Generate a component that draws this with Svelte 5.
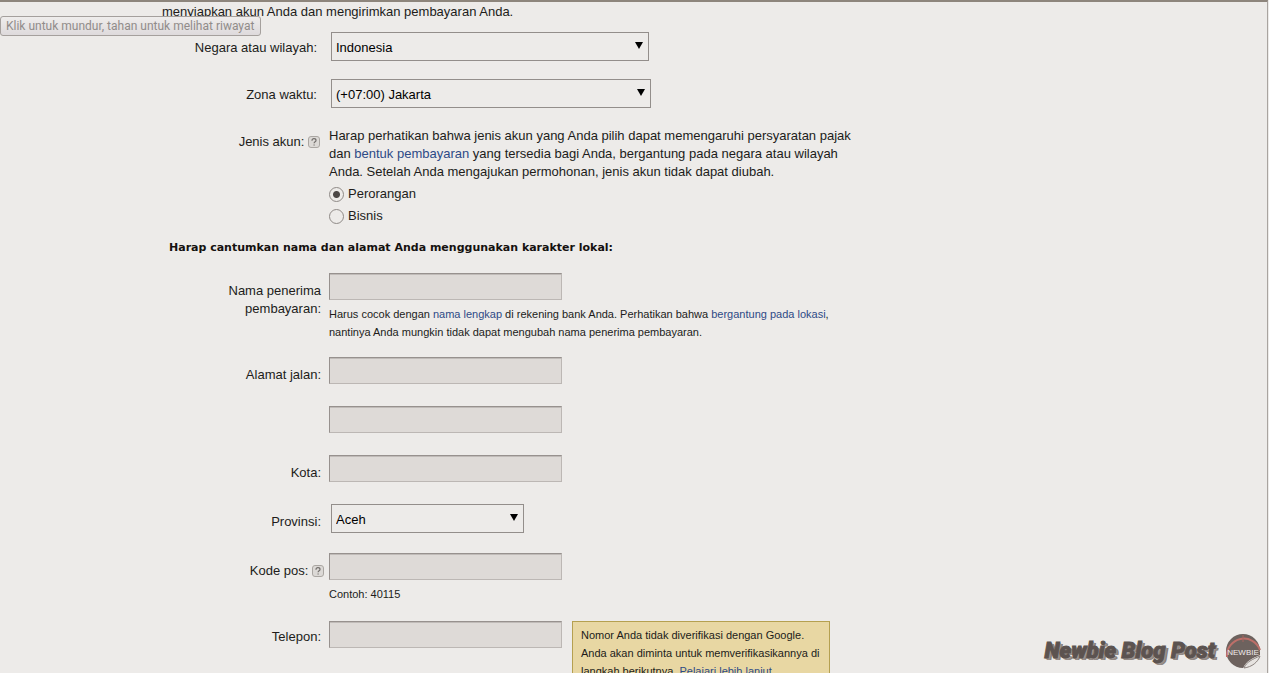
<script>
	let country = $state('Indonesia');
	let timezone = $state('(+07:00) Jakarta');
	let accountType = $state('Perorangan');
	let province = $state('Aceh');
	let form = $state({ payee: '', street: '', street2: '', city: '', zip: '', phone: '' });
</script>

{#snippet help()}
	<svg class="help" viewBox="0 0 12 12" aria-hidden="true">
		<rect x="0.5" y="0.5" width="11" height="11" rx="2.5" fill="#dcd9d6" stroke="#aaa6a2" />
		<path
			d="M4 4.7C4 3.3 4.8 2.7 6 2.7s2 .7 2 1.7c0 1.4-1.9 1.4-1.9 2.9M6.1 8.4v1.2"
			fill="none"
			stroke="#716d6a"
			stroke-width="1.2"
		/>
	</svg>
{/snippet}

<div class="page">
	<div class="tooltip" role="tooltip">Klik untuk mundur, tahan untuk melihat riwayat</div>

	<main>
		<p class="intro">menyiapkan akun Anda dan mengirimkan pembayaran Anda.</p>

		<form>
			<section class="account">
				<div class="row">
					<label class="label" for="country">Negara atau wilayah:</label>
					<div class="select country">
						<select id="country" bind:value={country}>
							<option>Indonesia</option>
						</select>
					</div>
				</div>

				<div class="row">
					<label class="label" for="timezone">Zona waktu:</label>
					<div class="select timezone">
						<select id="timezone" bind:value={timezone}>
							<option>(+07:00) Jakarta</option>
						</select>
					</div>
				</div>

				<div class="row">
					<span class="label with-help" id="account-type">Jenis akun: {@render help()}</span>
					<div class="types" role="radiogroup" aria-labelledby="account-type">
						<p>
							Harap perhatikan bahwa jenis akun yang Anda pilih dapat memengaruhi persyaratan pajak dan
							<a href="#payment">bentuk pembayaran</a> yang tersedia bagi Anda, bergantung pada negara
							atau wilayah Anda. Setelah Anda mengajukan permohonan, jenis akun tidak dapat diubah.
						</p>
						<label class="radio">
							<input type="radio" name="type" value="Perorangan" bind:group={accountType} />
							Perorangan
						</label>
						<label class="radio">
							<input type="radio" name="type" value="Bisnis" bind:group={accountType} />
							Bisnis
						</label>
					</div>
				</div>
			</section>

			<h2>Harap cantumkan nama dan alamat Anda menggunakan karakter lokal:</h2>

			<section class="address">
				<div class="row">
					<label class="label" for="payee">Nama penerima pembayaran:</label>
					<div>
						<input class="text" id="payee" type="text" bind:value={form.payee} />
						<p class="hint">
							Harus cocok dengan <a href="#name">nama lengkap</a> di rekening bank Anda. Perhatikan
							bahwa <a href="#location">bergantung pada lokasi</a>, nantinya Anda mungkin tidak dapat
							mengubah nama penerima pembayaran.
						</p>
					</div>
				</div>

				<div class="row">
					<label class="label" id="street-label" for="street">Alamat jalan:</label>
					<input class="text" id="street" type="text" bind:value={form.street} />
				</div>

				<div class="row">
					<span class="label"></span>
					<input class="text" type="text" aria-labelledby="street-label" bind:value={form.street2} />
				</div>

				<div class="row">
					<label class="label" for="city">Kota:</label>
					<input class="text" id="city" type="text" bind:value={form.city} />
				</div>

				<div class="row">
					<label class="label" for="province">Provinsi:</label>
					<div class="select province">
						<select id="province" bind:value={province}>
							<option>Aceh</option>
						</select>
					</div>
				</div>

				<div class="row">
					<label class="label with-help" for="zip">Kode pos: {@render help()}</label>
					<div>
						<input class="text" id="zip" type="text" bind:value={form.zip} />
						<p class="hint">Contoh: 40115</p>
					</div>
				</div>

				<div class="row phone">
					<label class="label" for="phone">Telepon:</label>
					<div class="phone-field">
						<input class="text" id="phone" type="text" bind:value={form.phone} />
						<p class="note">
							Nomor Anda tidak diverifikasi dengan Google. Anda akan diminta untuk memverifikasikannya
							di langkah berikutnya. <a href="#verify">Pelajari lebih lanjut</a>
						</p>
					</div>
				</div>
			</section>
		</form>
	</main>

	<div class="watermark">
		<span>Newbie Blog Post</span>
		<svg viewBox="0 0 36 36" aria-hidden="true">
			<path d="M35 18A17 17 0 1 0 18 35C20 29 27 23 35 18Z" fill="#6d625e" />
			<path d="M2 24A17 17 0 0 1 35 17" fill="none" stroke="#bd6f69" stroke-width="2" />
			<path d="M18 2v7" stroke="#a7645f" />
			<path d="M35 18V22C28 25 21 28 18 35L17 30Z" fill="#6d625e" />
			<path d="M19 35C21 29 28 26 35 23 33 29 27 34 19 35Z" fill="#e6e3e0" stroke="#8b827e" />
			<text x="18" y="22" text-anchor="middle">NEWBIE</text>
		</svg>
	</div>
</div>

<style>
	:global(body) {
		overflow: hidden;
		background: #edebe9;
	}

	.page {
		position: relative;
		box-sizing: border-box;
		height: 100vh;
		overflow: hidden;
		margin-right: 1px;
		border-top: 2px solid #8d857c;
		border-right: 1px solid #a9a4a0;
		color: #211c1a;
		font: 13px/18px 'Liberation Sans', Arial, sans-serif;
	}

	p,
	h2 {
		margin: 0;
	}

	a {
		color: #2d4a86;
		text-decoration: none;
	}

	.tooltip {
		position: absolute;
		top: 14px;
		left: 0;
		padding: 0 6px 0 5px;
		border: 1px solid #a5a09d;
		border-radius: 3px;
		background: linear-gradient(#efedec, #dedadc);
		color: #918c8a;
		font: 12px/18px Roboto, 'Noto Sans', sans-serif;
		white-space: nowrap;
	}

	main {
		padding-top: 1px;
	}

	.intro {
		padding-left: 162px;
		margin-bottom: 11px;
	}

	.account,
	.address {
		display: flex;
		flex-direction: column;
	}

	.account {
		gap: 18px;
	}

	.address {
		gap: 16px;
	}

	.row {
		display: flex;
		align-items: flex-start;
	}

	.address .row {
		min-height: 33px;
	}

	.label {
		box-sizing: border-box;
		flex: none;
		width: 329px;
		padding: 7px 12px 0 180px;
		text-align: right;
	}

	.address .label {
		padding: 9px 8px 0 200px;
	}

	.label.with-help {
		padding-right: 9px;
	}

	.address .label.with-help {
		padding-right: 5px;
	}

	.help {
		width: 12px;
		height: 12px;
		vertical-align: -2px;
	}

	.select {
		position: relative;
		margin-left: 2px;
	}

	.select::after {
		content: '';
		position: absolute;
		top: 10px;
		right: 6px;
		border: 4px solid transparent;
		border-top: 7px solid #000;
		border-bottom: 0;
		pointer-events: none;
	}

	select {
		appearance: none;
		display: block;
		width: 100%;
		height: 29px;
		padding: 2px 20px 0 4px;
		border: 1px solid #938e8b;
		border-radius: 0;
		background: transparent;
		color: #000;
		font: inherit;
	}

	.country {
		width: 318px;
	}

	.timezone {
		width: 320px;
	}

	.province {
		width: 193px;
	}

	.types {
		max-width: 530px;
		padding-top: 1px;
	}

	.types p {
		margin-bottom: 2px;
	}

	.radio {
		display: flex;
		align-items: center;
		gap: 4px;
		height: 22px;
	}

	.radio input {
		appearance: none;
		box-sizing: border-box;
		width: 15px;
		height: 15px;
		margin: 0;
		border: 1px solid #8f8a87;
		border-radius: 50%;
	}

	.radio input:checked {
		background: radial-gradient(circle, #4c4846 3px, transparent 4px);
	}

	h2 {
		padding: 12px 0 16px 169px;
		color: #15110f;
		font: bold 11px/18px 'DejaVu Sans', Verdana, sans-serif;
	}

	.text {
		box-sizing: border-box;
		display: block;
		flex: none;
		width: 233px;
		height: 27px;
		padding: 0 4px;
		border: 1px solid #bcb7b4;
		border-top-color: #97918e;
		border-left-color: #97918e;
		background: #dedad7;
		box-shadow: inset 0 1px #c0bbb8;
		font: inherit;
	}

	.hint {
		max-width: 500px;
		margin-top: 5px;
		font-size: 11px;
	}

	.phone {
		margin-top: 2px;
	}

	.phone .label {
		padding-top: 7px;
	}

	.phone-field {
		display: flex;
		align-items: flex-start;
		gap: 10px;
	}

	.note {
		box-sizing: border-box;
		width: 258px;
		padding: 4px 8px;
		border: 1px solid #b5a050;
		background: #e8d7a3;
		font-size: 11px;
	}

	.watermark {
		position: absolute;
		right: 6px;
		bottom: 4px;
		display: flex;
		align-items: center;
		gap: 10px;
	}

	.watermark span {
		color: #5c5350;
		font: italic 900 22px/36px Roboto, 'Liberation Sans', sans-serif;
		-webkit-text-stroke: 1px #5c5350;
		text-shadow:
			1px 1px #a39a95,
			2px 2px #958c87,
			3px 2px #857c77;
	}

	.watermark svg {
		width: 36px;
		height: 36px;
	}

	.watermark text {
		fill: #f0eceb;
		font: 8px 'Liberation Sans', Arial, sans-serif;
	}
</style>
